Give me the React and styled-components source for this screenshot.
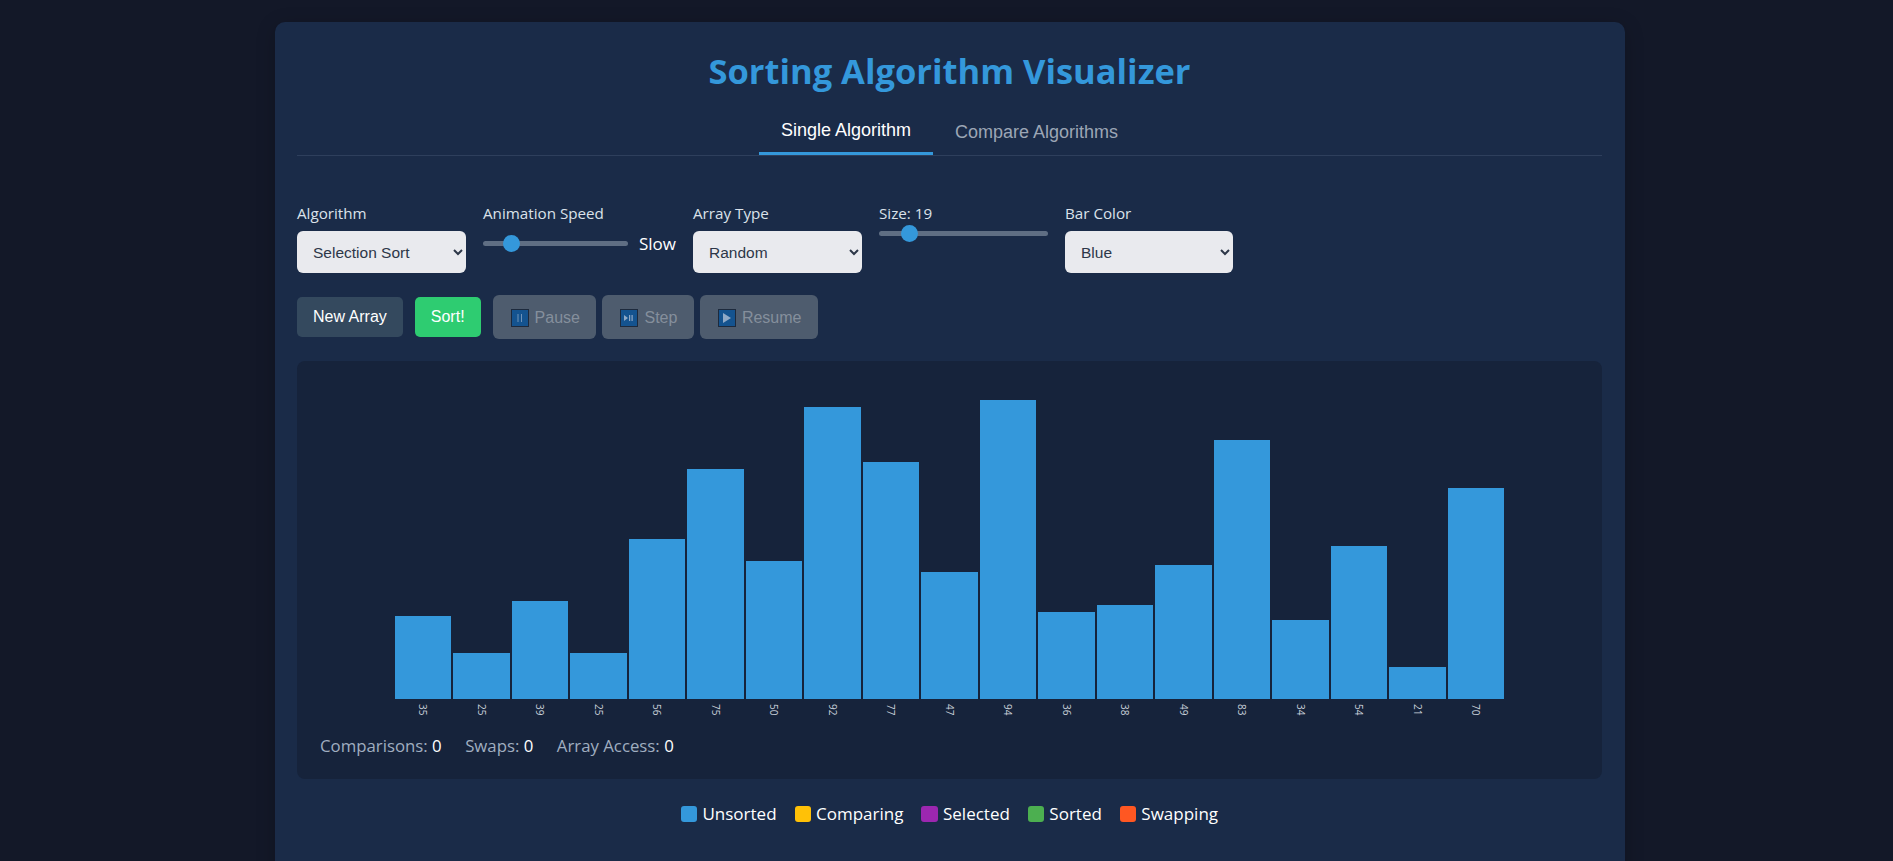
import React from 'react'
import styled, { createGlobalStyle } from 'styled-components'

const sans = `'Open Sans', 'Noto Sans', sans-serif`
const arial = `'Liberation Sans', Arial, sans-serif`

const GlobalStyle = createGlobalStyle`
  html, body {
    margin: 0;
    height: 100%;
    overflow: hidden;
    background: #131828;
    font-family: ${sans};
    color: #fff;
  }
`

const Page = styled.div`
  height: 861px;
  padding: 22px 0 0 7px;
  box-sizing: border-box;
  background: #131828;
  overflow: hidden;
`

const Card = styled.main`
  width: 1350px;
  margin: 0 auto;
  min-height: 900px;
  padding: 25px 23px 25px 22px;
  box-sizing: border-box;
  background: #1a2b48;
  border-radius: 10px;
  box-shadow: 0 4px 20px rgba(0, 0, 0, 0.2);
`

const Title = styled.h1`
  margin: 0;
  text-align: center;
  color: #3498db;
  font-size: 34.5px;
  line-height: 48px;
  font-weight: 700;
`

const Tabs = styled.div`
  display: flex;
  justify-content: center;
  margin-top: 17px;
  border-bottom: 1px solid #2e3f5c;
`

const Tab = styled.button`
  padding: ${p => (p.$active ? '8px 22px 12px' : '10px 22px')};
  border: 0;
  border-bottom: 3px solid ${p => (p.$active ? '#3498db' : 'transparent')};
  background: none;
  color: ${p => (p.$active ? '#fff' : '#9ca6b5')};
  font: 500 18px/20px ${arial};
`

const Controls = styled.div`
  display: flex;
  align-items: flex-start;
  gap: 17px;
  margin-top: 47px;
`

const Field = styled.div`
  display: flex;
  flex-direction: column;
  gap: 8px;
`

const Label = styled.label`
  font-size: 15.2px;
  line-height: 20px;
  color: #dbe2ea;
`

const Select = styled.select`
  width: ${p => p.$width || 169}px;
  height: 42px;
  padding: 0 12px;
  border: 0;
  border-radius: 6px;
  background: #e9eaee;
  color: #2d3748;
  font: 15.5px ${arial};
`

const SliderRow = styled.div`
  display: flex;
  align-items: center;
  gap: 11px;
  height: 24px;
`

const Track = styled.div`
  position: relative;
  width: ${p => p.$width}px;
  height: 5px;
  border-radius: 3px;
  background: #5f6e83;
`

const Thumb = styled.span`
  position: absolute;
  top: -6px;
  width: 17px;
  height: 17px;
  border-radius: 50%;
  background: #3498db;
`

const SliderText = styled.span`
  font-size: 17px;
`

const Buttons = styled.div`
  display: flex;
  align-items: center;
  gap: 6px;
  height: 44px;
  margin-top: 22px;
`

const Button = styled.button`
  height: 40px;
  padding: 0 16px;
  border: 0;
  border-radius: 5px;
  background: ${p => (p.$primary ? '#2ecc71' : '#34495e')};
  color: #fff;
  margin-right: ${p => p.$gap}px;
  font: 500 16px ${arial};
`

const IconButton = styled.button`
  display: flex;
  align-items: center;
  gap: 6px;
  height: 44px;
  padding: 2px 16.5px 0 18px;
  border: 0;
  border-radius: 6px;
  background: #4e5c6e;
  color: #858f9c;
  font: 500 16px ${arial};
`

const Emoji = styled.span`
  display: flex;
  align-items: center;
  justify-content: center;
  width: 18px;
  height: 18px;
  box-sizing: border-box;
  border: 1px solid #1d2a3d;
  background: #14538f;
`

const Panel = styled.section`
  margin-top: 22px;
  height: 418px;
  padding: 0 23px;
  box-sizing: border-box;
  background: #16233b;
  border-radius: 8px;
  display: flex;
  flex-direction: column;
`

const Chart = styled.div`
  display: flex;
  align-items: flex-end;
  justify-content: center;
  gap: 2px;
  height: 338px;
`

const Bar = styled.div`
  width: 56.5px;
  background: #3498db;
  flex: none;
`

const Values = styled.div`
  display: flex;
  justify-content: center;
  gap: 2px;
  height: 21px;
  margin-top: 5px;
`

const Value = styled.span`
  width: 56.5px;
  flex: none;
  display: flex;
  justify-content: flex-start;
  align-items: center;
  writing-mode: vertical-rl;
  font-size: 10px;
  line-height: 12px;
  color: #c6ced8;
`

const Stats = styled.div`
  display: flex;
  gap: 23.5px;
  margin-top: 9px;
  font-size: 16.8px;
  line-height: 23px;
  color: #a0aec0;
`

const StatValue = styled.span`
  color: #fff;
`

const Legend = styled.div`
  display: flex;
  justify-content: center;
  gap: 18px;
  margin-top: 24px;
`

const LegendItem = styled.div`
  display: flex;
  align-items: center;
  gap: 5px;
  font-size: 17px;
  line-height: 22px;
`

const Swatch = styled.span`
  width: 16.5px;
  height: 16.5px;
  border-radius: 3px;
  background: ${p => p.$color};
`

const values = [35, 25, 39, 25, 56, 75, 50, 92, 77, 47, 94, 36, 38, 49, 83, 34, 54, 21, 70]
const barHeight = v => 3.667 * v - 45.4

const legend = [
  ['Unsorted', '#3498db'],
  ['Comparing', '#ffc107'],
  ['Selected', '#9c27b0'],
  ['Sorted', '#4caf50'],
  ['Swapping', '#ff5722'],
]

const PauseIcon = () => (
  <svg width="8" height="8" viewBox="0 0 8 8" fill="#6f93b8"><rect x="1.5" width="1" height="8" /><rect x="5" width="1" height="8" /></svg>
)
const StepIcon = () => (
  <svg width="10" height="6" viewBox="0 0 10 6" fill="#8fa9c6"><path d="M0 0l4 3-4 3z" /><rect x="5" width="1.2" height="6" /><rect x="7.5" width="1.2" height="6" /></svg>
)
const PlayIcon = () => (
  <svg width="8" height="10" viewBox="0 0 8 10" fill="#8fa9c6"><path d="M0 0l8 5-8 5z" /></svg>
)

export default function App() {
  return (
    <Page>
      <GlobalStyle />
      <Card>
        <Title>Sorting Algorithm Visualizer</Title>
        <Tabs>
          <Tab $active>Single Algorithm</Tab>
          <Tab>Compare Algorithms</Tab>
        </Tabs>
        <Controls>
          <Field>
            <Label>Algorithm</Label>
            <Select defaultValue="Selection Sort"><option>Selection Sort</option></Select>
          </Field>
          <Field>
            <Label>Animation Speed</Label>
            <SliderRow>
              <Track $width={145}><Thumb style={{ left: 19.5 }} /></Track>
              <SliderText>Slow</SliderText>
            </SliderRow>
          </Field>
          <Field>
            <Label>Array Type</Label>
            <Select><option>Random</option></Select>
          </Field>
          <Field>
            <Label>Size: 19</Label>
            <Track $width={169}><Thumb style={{ left: 21.5 }} /></Track>
          </Field>
          <Field>
            <Label>Bar Color</Label>
            <Select $width={168}><option>Blue</option></Select>
          </Field>
        </Controls>
        <Buttons>
          <Button $gap={6}>New Array</Button>
          <Button $primary $gap={6}>Sort!</Button>
          <IconButton disabled><Emoji><PauseIcon /></Emoji>Pause</IconButton>
          <IconButton disabled><Emoji><StepIcon /></Emoji>Step</IconButton>
          <IconButton disabled><Emoji><PlayIcon /></Emoji>Resume</IconButton>
        </Buttons>
        <Panel>
          <Chart>
            {values.map((v, i) => <Bar key={i} style={{ height: barHeight(v) }} />)}
          </Chart>
          <Values>
            {values.map((v, i) => <Value key={i}>{v}</Value>)}
          </Values>
          <Stats>
            <span>Comparisons: <StatValue>0</StatValue></span>
            <span>Swaps: <StatValue>0</StatValue></span>
            <span>Array Access: <StatValue>0</StatValue></span>
          </Stats>
        </Panel>
        <Legend>
          {legend.map(([name, color]) => (
            <LegendItem key={name}><Swatch $color={color} />{name}</LegendItem>
          ))}
        </Legend>
      </Card>
    </Page>
  )
}
